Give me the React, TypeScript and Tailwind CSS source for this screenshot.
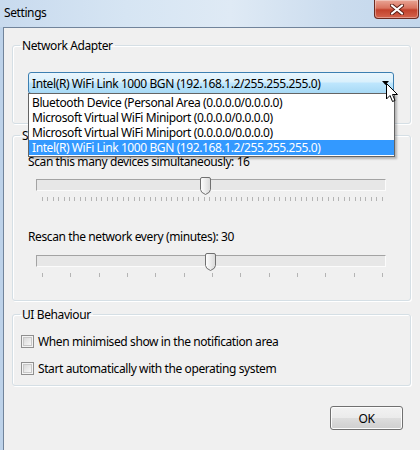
const font = "font-['Segoe_UI','Noto_Sans','Open_Sans',sans-serif]";

function Thumb() {
  return (
    <svg width="11" height="18" viewBox="0 0 11 18">
      <defs>
        <linearGradient id="thumbfill" x1="0" y1="0" x2="1" y2="0">
          <stop offset="0" stopColor="#ffffff" />
          <stop offset="1" stopColor="#d8d8d8" />
        </linearGradient>
      </defs>
      <path
        d="M0.5 2 Q0.5 0.5 2 0.5 H9 Q10.5 0.5 10.5 2 V12.5 Q10.5 15.5 5.5 17.5 Q0.5 15.5 0.5 12.5 Z"
        fill="url(#thumbfill)"
        stroke="#707070"
      />
    </svg>
  );
}

function Slider({ ticks, thumbLeft }: { ticks: number; thumbLeft: number }) {
  return (
    <div className="ml-[8px] w-[350px]">
      <div className="relative h-[12px] border-l border-t border-[#a3a3a3] border-b border-b-[#fbfbfb] border-r border-r-[#fbfbfb] bg-[#e7e7e7]">
        <div className="absolute top-[-3px]" style={{ left: thumbLeft }}>
          <Thumb />
        </div>
      </div>
      <div className="ml-[6px] mt-[6px] flex h-[4px] w-[341px] justify-between">
        {[...Array(ticks)].map((_, i) => (
          <div key={i} className="h-[4px] w-px bg-[#b4b4b4]"></div>
        ))}
      </div>
    </div>
  );
}

function Checkbox({ label }: { label: string }) {
  return (
    <div className="flex h-[13px] items-center">
      <div className="h-[13px] w-[13px] border border-[#8f8f8f] bg-[#f4f4f4] p-[1px]">
        <div className="h-full w-full border border-[#c8c8c8] bg-[linear-gradient(135deg,#d9d9d9,#f7f7f7)]"></div>
      </div>
      <span className="ml-[4px] leading-[15px]">{label}</span>
    </div>
  );
}

function Group({ title, className, children }: { title: string; className?: string; children: React.ReactNode }) {
  return (
    <fieldset className={`rounded-[3px] border border-[#d5dfe5] shadow-[inset_1px_1px_0_#ffffff,1px_1px_0_#ffffff] ${className ?? ''}`}>
      <legend className="ml-[7px] px-[2px] leading-[15px]">{title}</legend>
      {children}
    </fieldset>
  );
}

const items = [
  'Bluetooth Device (Personal Area (0.0.0.0/0.0.0.0)',
  'Microsoft Virtual WiFi Miniport (0.0.0.0/0.0.0.0)',
  'Microsoft Virtual WiFi Miniport (0.0.0.0/0.0.0.0)',
  'Intel(R) WiFi Link 1000 BGN (192.168.1.2/255.255.255.0)',
];

export default function App() {
  return (
    <div className={`relative h-[450px] w-[420px] overflow-hidden bg-[#bdd2e9] text-[12px] tracking-[-0.4px] text-black ${font}`}>
      {/* Title bar */}
      <div className="flex h-[27px] items-start justify-between bg-[linear-gradient(90deg,#c8daee_0%,#d6e5f3_30%,#dfeaf5_55%,#cbdcee_80%,#c3d7ec_100%)]">
        <span className="ml-[4px] mt-[5px] leading-[15px]">Settings</span>
        <div className="mr-[1px] flex h-[19px] w-[45px] items-center justify-center rounded-b-[4px] border border-t-0 border-[#6b2a20] bg-[linear-gradient(180deg,#e9a595_0%,#d9735f_45%,#c2412b_55%,#d4644d_100%)] shadow-[inset_0_0_0_1px_rgba(255,255,255,0.35)]">
          <svg width="14" height="11" viewBox="0 0 14 11">
            <path d="M2 1.5 L12 9.5 M12 1.5 L2 9.5" stroke="#5a1d14" strokeWidth="4" strokeLinecap="round" />
            <path d="M2 1.5 L12 9.5 M12 1.5 L2 9.5" stroke="#ffffff" strokeWidth="2.2" strokeLinecap="round" />
          </svg>
        </div>
      </div>

      {/* Client area */}
      <div className="ml-[3px] h-[423px] border-l border-t border-[#71849b] bg-[#f0f0f0] pl-[8px] pr-[9px]">
        <Group title="Network Adapter" className="mt-[10px]">
          <div className="relative mb-[29px] ml-[15px] mr-[16px] mt-[19px]">
            <div className="flex h-[22px] items-center justify-between rounded-[3px] border border-[#3c7fb1] bg-[linear-gradient(180deg,#eaf6fd_0%,#d9f0fc_45%,#bee6fd_50%,#a7d9f5_100%)] pl-[3px] pr-[4px]">
              <span className="leading-[15px]">Intel(R) WiFi Link 1000 BGN (192.168.1.2/255.255.255.0)</span>
              <svg width="7" height="4" viewBox="0 0 7 4" className="mb-[1px]">
                <path d="M0 0 H7 L3.5 4 Z" fill="#000" />
              </svg>
            </div>
            {/* Dropdown list */}
            <div className="absolute left-0 right-[-1px] top-[21px] z-10 border border-[#646464] bg-white py-[1px] shadow-[2px_2px_2px_rgba(0,0,0,0.25)]">
              {items.map((t, i) => (
                <div
                  key={i}
                  className={`h-[15px] pl-[3px] leading-[15px] ${i === 3 ? 'bg-[#3399ff] text-white' : ''}`}
                >
                  {t}
                </div>
              ))}
            </div>
            {/* Mouse pointer */}
            <svg width="13" height="20" viewBox="0 0 13 20" className="absolute right-[-5px] top-[11px] z-20">
              <path d="M0.5 0.5 V16 L4 12.5 L6.5 18.5 L9 17.5 L6.5 11.5 H11.5 Z" fill="#ffffff" stroke="#000" strokeWidth="1" strokeLinejoin="round" />
            </svg>
          </div>
        </Group>

        <Group title="Scanning" className="mt-[4px]">
          <div className="pb-[23px] pl-[15px]">
            <div className="mt-[11px] leading-[15px]">Scan this many devices simultaneously: 16</div>
            <div className="mt-[10px]">
              <Slider ticks={64} thumbLeft={163} />
            </div>
            <div className="mt-[28px] leading-[15px]">Rescan the network every (minutes): 30</div>
            <div className="mt-[11px]">
              <Slider ticks={13} thumbLeft={168} />
            </div>
          </div>
        </Group>

        <Group title="UI Behaviour" className="mt-[6px]">
          <div className="pb-[10px] pl-[8px]">
            <div className="mt-[13px]">
              <Checkbox label="When minimised show in the notification area" />
            </div>
            <div className="mt-[14px]">
              <Checkbox label="Start automatically with the operating system" />
            </div>
          </div>
        </Group>

        <div className="mt-[20px] flex justify-end pr-[8px]">
          <button className="h-[24px] w-[73px] rounded-[3px] border border-[#707070] bg-[linear-gradient(180deg,#f2f2f2_0%,#ebebeb_48%,#dddddd_52%,#cfcfcf_100%)] leading-[15px] shadow-[inset_0_0_0_1px_#fcfcfc]">
            OK
          </button>
        </div>
      </div>
    </div>
  );
}
